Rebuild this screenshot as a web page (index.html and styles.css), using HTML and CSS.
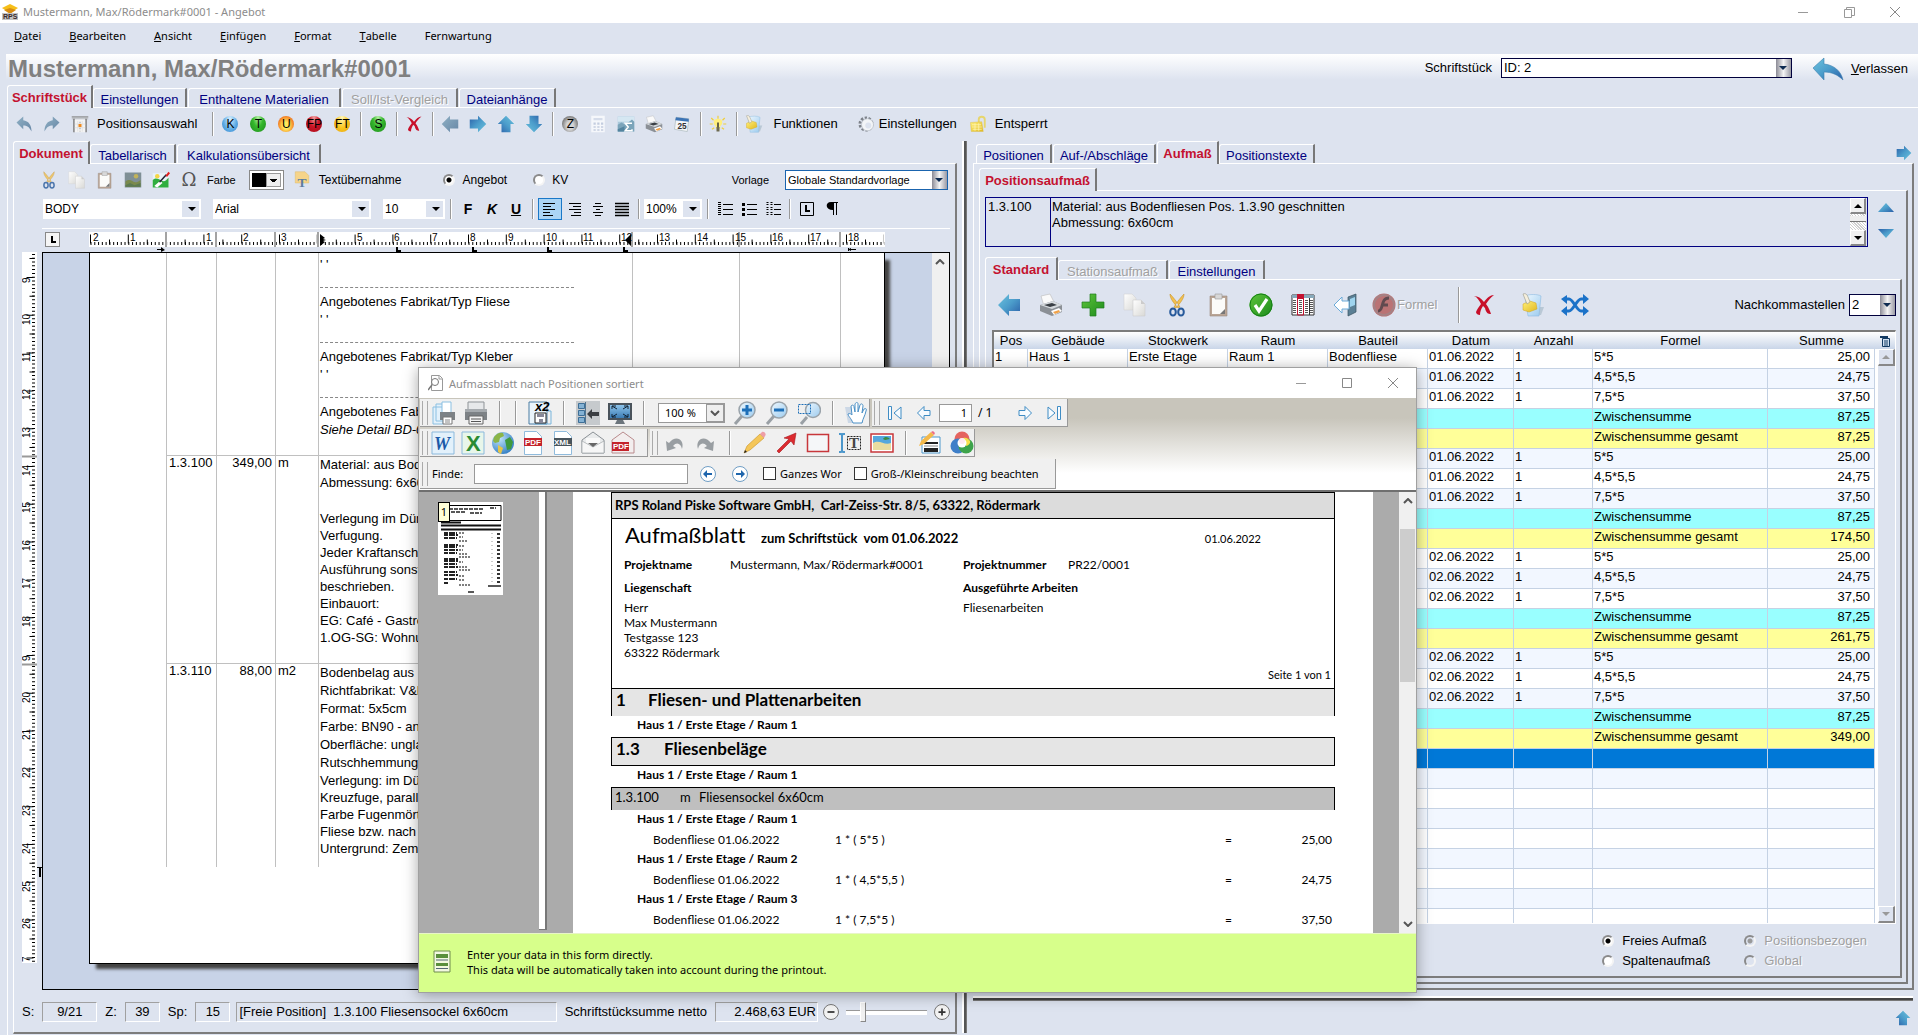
FILE: index.html
```html
<!DOCTYPE html>
<html lang="de">
<head>
<meta charset="utf-8">
<title>Mustermann, Max/Rödermark#0001 - Angebot</title>
<link rel="stylesheet" href="styles.css">
</head>
<body>
<svg class="defs" aria-hidden="true">
  <defs>
    <linearGradient id="gBlue" x1="0" y1="0" x2="1" y2="1"><stop offset="0" stop-color="#6cc4de"/><stop offset=".5" stop-color="#4c9dcb"/><stop offset="1" stop-color="#2a5fa8"/></linearGradient>
    <linearGradient id="gSlate" x1="0" y1="0" x2="1" y2="1"><stop offset="0" stop-color="#8fb0c4"/><stop offset="1" stop-color="#6787a6"/></linearGradient>
    <linearGradient id="gGreen" x1="0" y1="0" x2="1" y2="1"><stop offset="0" stop-color="#5fc63a"/><stop offset="1" stop-color="#1c8a1c"/></linearGradient>
    <linearGradient id="gPaper" x1="0" y1="0" x2="1" y2="1"><stop offset="0" stop-color="#fff"/><stop offset="1" stop-color="#d9d9d6"/></linearGradient>
    <linearGradient id="gGold" x1="0" y1="0" x2="1" y2="1"><stop offset="0" stop-color="#fff07a"/><stop offset="1" stop-color="#e0b820"/></linearGradient>
    <linearGradient id="gGlass" x1="0" y1="0" x2="1" y2="1"><stop offset="0" stop-color="#eef8ff"/><stop offset="1" stop-color="#9ccbee"/></linearGradient>
    <linearGradient id="gSky" x1="0" y1="0" x2="0" y2="1"><stop offset="0" stop-color="#8cc3ea"/><stop offset="1" stop-color="#3c7cb4"/></linearGradient>
    <radialGradient id="gGlobe" cx=".35" cy=".3" r=".8"><stop offset="0" stop-color="#bfe3fa"/><stop offset="1" stop-color="#2b78c0"/></radialGradient>
  </defs>
  <symbol id="undo" viewBox="0 0 24 24"><path d="M2 10 11 2v5c7 1 11 6 11 15-3-6-6-8-11-8v5z"/></symbol>
  <symbol id="redo" viewBox="0 0 24 24"><path d="M22 10 13 2v5C6 8 2 13 2 22c3-6 6-8 11-8v5z"/></symbol>
  <symbol id="arrow" viewBox="0 0 24 24"><path d="M1 12 12 1v5h11v12H12v5z"/></symbol>
  <symbol id="leave" viewBox="0 0 32 24"><path d="M1 11 12 1v6c10 1 17 7 19 16-5-5-11-8-19-8v8z" fill="url(#gBlue)" stroke="#3c7fae" stroke-width=".6"/></symbol>
  <symbol id="cross" viewBox="0 0 24 24"><path d="M2 3c4 0 7 2 10 6 3-4 6-7 10-7-4 3-6 6-8 9 3 4 4 7 5 10-3 0-5-1-6-6-1-1-1-1-2-2-2 3-3 6-3 9-2 0-4-1-4-3 1-3 3-5 5-8C7 7 5 4 2 3z" fill="#c8102a"/></symbol>
  <symbol id="window" viewBox="0 0 24 24"><path d="M1 2h22v4H1z" fill="#c4c7cc"/><path d="M1 2h22v1H1z" fill="#777"/><path d="M4 5v18M20 5v18" stroke="#777" stroke-width="2"/><path d="M5 6h14v17H5z" fill="#f4f4f4"/><path d="M9 8v14M15 8v14M5 12h14M5 17h14" stroke="#ddd"/><path d="M12 9v13" stroke="#bbb" stroke-width="2" stroke-dasharray="2 2"/><path d="M10 12h4v4h-4z" fill="#f08a1c"/></symbol>
  <symbol id="calc" viewBox="0 0 24 24"><path d="M3 1h18v22H3z" fill="#f5f7fb"/><path d="M6 4h12v3H6z" fill="#d5dcea"/><path d="M6 10h3v3H6zm5 0h3v3h-3zm5 0h3v3h-3zM6 15h3v2H6zm5 0h3v2h-3zm5 0h3v2h-3zM6 19h3v2H6zm5 0h3v2h-3zm5 0h3v2h-3z" fill="#c3cde0"/></symbol>
  <symbol id="chart" viewBox="0 0 24 24"><path d="M1 2h22v20H1z" fill="#a9c7da"/><path d="M1 2h22v7H1z" fill="#d5e7f2"/><path d="M1 13l5-3 5 3 9-7 3 3v13H1z" fill="#7ba4ba"/><path d="M1 19l9-4v7H1z" fill="#53849f"/><path d="M19 12v-1h-8l4 5-4 5h9v-2" fill="none" stroke="#fff" stroke-width="2"/></symbol>
  <symbol id="printer" viewBox="0 0 24 24"><path d="M2 3 11 1l4 8-10 4z" fill="#fafafa" stroke="#bbb" stroke-width=".6"/><path d="M1 12 14 8l9 4v7l-10 4L1 18z" fill="#8b9096"/><path d="M1 12 14 8l9 4-10 4z" fill="#d6dade"/><path d="M5 12l8-2 5 2-7 2z" fill="#3a3f45"/><path d="M12 18l8-3 3 3-8 4z" fill="#fff"/><path d="M14 19l6-2 1 2-5 2z" fill="#f0a24a"/></symbol>
  <symbol id="bulb" viewBox="0 0 24 24"><path d="M12 1v4M3 4l3 3M21 4l-3 3M1 12h4M19 12h4M4 19l3-2M20 19l-3-2" stroke="#f0cf3c" stroke-width="1.6"/><path d="M12 5c7 0 7 7 3 10v3H9v-3C5 12 5 5 12 5z" fill="#ffef7c"/><path d="M10 16h4v6h-4z" fill="#6d6a50"/><path d="M12 10v6" stroke="#333" stroke-width="2"/></symbol>
  <symbol id="bin" viewBox="0 0 24 24"><path d="M17 14h6l-3 8h-4z" fill="#a9bccb" opacity=".7"/><path d="M4 3c4-2 13-2 16 0l-2 20H7z" fill="url(#gGlass)" stroke="#8dbbe0" stroke-width=".6"/><path d="M2 11l7-3 6 2 1 6-8 3-6-2z" fill="url(#gGold)" stroke="#d3a51d" stroke-width=".5"/><path d="M2 1c2-1 4 0 5 3l2 5-3 2z" fill="#f6efdc" stroke="#998" stroke-width=".6"/></symbol>
  <symbol id="gear" viewBox="0 0 24 24"><circle cx="12" cy="12" r="8" fill="none" stroke="#7d828a" stroke-width="4" stroke-dasharray="3 2"/><circle cx="14" cy="13" r="8" fill="#f3f5f8" stroke="#bcc2ca"/><circle cx="15" cy="14" r="4" fill="#dde3ef"/></symbol>
  <symbol id="lock" viewBox="0 0 24 24"><path d="M13 11V6c0-5 8-5 8 0v11" fill="none" stroke="#e7d66d" stroke-width="2.5"/><path d="M2 10l15-1 2 13H3z" fill="url(#gGold)" stroke="#d8bd4a" stroke-width=".6"/><path d="M4 13h12M4 16h13M5 19h12M8 11v10M13 11v10" stroke="#fff7b8"/></symbol>
  <symbol id="scissors" viewBox="0 0 24 24"><path d="M5 1c0 5 4 9 8 14l2-1C12 9 8 4 5 1zM19 1c0 5-4 9-8 14l-2-1c3-5 7-10 10-13z" fill="#f2c14e" stroke="#c8922c" stroke-width=".6"/><ellipse cx="8" cy="19" rx="2.8" ry="3.6" fill="none" stroke="#275a9b" stroke-width="2"/><ellipse cx="16" cy="19" rx="2.8" ry="3.6" fill="none" stroke="#275a9b" stroke-width="2"/></symbol>
  <symbol id="copy" viewBox="0 0 24 24"><path d="M1 1h8l4 4v12H1z" fill="url(#gPaper)" stroke="#d4d4d4" stroke-width=".6"/><path d="M10 7h8l4 4v12H10z" fill="url(#gPaper)" stroke="#ccc" stroke-width=".6"/><path d="M18 7v4h4" fill="#ccc"/></symbol>
  <symbol id="paste" viewBox="0 0 24 24"><path d="M3 3h17v20H3z" fill="#b9a596" stroke="#9c8a7d" stroke-width=".6"/><path d="M5 5h13v16H5z" fill="#fbfbf9"/><path d="M8 1h7v5H8z" fill="#d8d8d8" stroke="#999" stroke-width=".6"/><path d="M13 21l5-5v5z" fill="#777"/></symbol>
  <symbol id="image" viewBox="0 0 24 24"><path d="M1 2h22v20H1z" fill="#7f8f95"/><path d="M2 14c4-3 7-2 10 0s6 1 10-2v9H2z" fill="#7a8a4c"/><circle cx="16" cy="7" r="3" fill="#c2b35a"/><path d="M2 19l6-3 6 3 8-3v5H2z" fill="#5c7a52"/></symbol>
  <symbol id="imageedit" viewBox="0 0 24 24"><path d="M1 3h21v19H1z" fill="#e9f3f8"/><path d="M1 12c5-4 8-1 12 1s6-1 9-4v13H1z" fill="#2fae3f"/><path d="M3 20l8-7 3 3-7 6z" fill="#fff"/><circle cx="7" cy="7" r="3" fill="#f6d548"/><path d="M10 15 19 5" stroke="#223" stroke-width="2"/><path d="M18 6l4-5 2 2-4 5z" fill="#e02020"/></symbol>
  <symbol id="plus" viewBox="0 0 24 24"><path d="M9 1h6v8h8v6h-8v8H9v-8H1V9h8z" fill="url(#gGreen)" stroke="#1f7d1f" stroke-width=".7"/></symbol>
  <symbol id="check" viewBox="0 0 24 24"><circle cx="12" cy="12" r="11.5" fill="url(#gGreen)"/><circle cx="12" cy="12" r="11" fill="none" stroke="#158015"/><path d="M6 12l4 6 8-12" fill="none" stroke="#fff" stroke-width="3.2"/></symbol>
  <symbol id="grid" viewBox="0 0 24 24"><path d="M1 2h22v20H1z" fill="#fff" stroke="#333"/><path d="M1 2h5v3H1zM13 2h10v3H13z" fill="#8ab"/><path d="M3.500 7v14M9.500 7v14M15.500 7v14M20.500 7v14" stroke="#555" stroke-width="3" stroke-dasharray="1 1"/><path d="M6 1h7v5H6z" fill="#c41230"/><path d="M6.500 3h6v19h-6z" fill="none" stroke="#c41230"/><path d="M18.500 5v17" stroke="#333"/></symbol>
  <symbol id="device" viewBox="0 0 24 24"><path d="M15 4l8-3v18l-8 4z" fill="#5b8095" stroke="#37505f" stroke-width=".7"/><path d="M17 6l5-2v8l-5 2z" fill="#9ed4ee"/><path d="M1 12l8-8v4h7v8H9v4z" fill="#fff" stroke="#6aaad8"/></symbol>
  <symbol id="flash" viewBox="0 0 24 24"><circle cx="12" cy="12" r="11.500" fill="#b5605f"/><circle cx="12" cy="12" r="10" fill="none" stroke="#9c7172" stroke-width="2"/><path d="M17 5c-5 0-6 4-7 8s-2 5-4 5M10 12h6" fill="none" stroke="#4b3034" stroke-width="3"/></symbol>
  <symbol id="shuffle" viewBox="0 0 28 24"><path d="M3 6h5c4 0 8 12 12 12h4M3 18h5c4 0 8-12 12-12h4" fill="none" stroke="#1b72c8" stroke-width="3"/><path d="M22 1l6 5-6 5zM22 13l6 5-6 5zM6 2 0 6l6 5zM6 13l-6 5 6 5z" fill="#1b72c8"/></symbol>
  <symbol id="tri" viewBox="0 0 16 9"><path d="M0 9 8 0l8 9z" fill="url(#gBlue)"/></symbol>
  <symbol id="chev" viewBox="0 0 10 6"><path d="M1 5l4-4 4 4" fill="none" stroke="currentColor" stroke-width="2"/></symbol>
  <symbol id="min" viewBox="0 0 12 12"><path d="M1 6.500h10" stroke="#999"/></symbol>
  <symbol id="max" viewBox="0 0 12 12"><path d="M1.500 1.500h9v9h-9z" fill="none" stroke="#888"/></symbol>
  <symbol id="restore" viewBox="0 0 12 12"><path d="M1.500 3.500h7v8h-7zM3.500 3V1.500h8v8H9" fill="none" stroke="#999"/></symbol>
  <symbol id="close" viewBox="0 0 12 12"><path d="M1 1l10 10M11 1 1 11" stroke="#888"/></symbol>
  <symbol id="left" viewBox="0 0 16 16"><path d="M1 2.500h12M1 5.500h8M1 8.500h12M1 11.500h7M1 14.500h10" stroke="#000"/></symbol>
  <symbol id="right" viewBox="0 0 16 16"><path d="M3 2.500h12M7 5.500h8M3 8.500h12M8 11.500h7M5 14.500h10" stroke="#000"/></symbol>
  <symbol id="center" viewBox="0 0 16 16"><path d="M5 2.500h6M3 5.500h10M6 8.500h4M3 11.500h10M5 14.500h6" stroke="#000"/></symbol>
  <symbol id="justify" viewBox="0 0 16 16"><path d="M1 2.500h14M1 5.500h14M1 8.500h14M1 11.500h14M1 14.500h14" stroke="#000" stroke-width="1.400"/></symbol>
  <symbol id="numlist" viewBox="0 0 16 16"><path d="M6 3.500h10M6 8.500h10M6 13.500h10" stroke="#000"/><path d="M2.500 1v14" stroke="#000" stroke-width="3" stroke-dasharray="1 1"/></symbol>
  <symbol id="bullist" viewBox="0 0 16 16"><path d="M6 3.500h10M6 8.500h10M6 13.500h10" stroke="#000"/><path d="M1 2h3v3H1zm0 5h3v3H1zm0 5h3v3H1z"/></symbol>
  <symbol id="multilist" viewBox="0 0 16 16"><path d="M9 3.500h7M9 8.500h7M9 13.500h7" stroke="#000"/><path d="M2.500 1v4M6.500 1v4M2.500 6v4M6.500 6v4M2.500 11v4M6.500 11v4" stroke="#000" stroke-width="2" stroke-dasharray="1 1"/></symbol>
  <symbol id="tabframe" viewBox="0 0 16 16"><path d="M1.500 1.500h13v13h-13z" fill="none" stroke="#000"/><path d="M6 4h2v5h3v2H6z"/></symbol>
  <symbol id="para" viewBox="0 0 16 16"><path d="M8 1h7v1h-1v12h-1V2h-2v12h-1V9C2 9 2 1 8 1z"/></symbol>
  <symbol id="form" viewBox="0 0 24 24"><path d="M4 1h16v21H4z" fill="#f2f8e0" stroke="#6f8c4c"/><path d="M6 4h12v4H6zM6 13h12v3H6z" fill="#5a8f3c"/><path d="M6 10h12M6 18.500h12" stroke="#567"/></symbol>

  <symbol id="preview" viewBox="0 0 16 16"><path d="M3.500.500h8l3 3v12h-11z" fill="#fff" stroke="#999"/><path d="M11 1v3h3" fill="none" stroke="#999"/><circle cx="7" cy="7" r="3.500" fill="#fff" stroke="#777"/><path d="M4 10l-4 5" stroke="#777" stroke-width="1.500"/></symbol>
  <symbol id="prints" viewBox="0 0 24 24"><path d="M1 6h10v17H1zM4 3h10v17H4z" fill="#e3f1fb" stroke="#8bc0e2"/><path d="M10 1h9v12h-9z" fill="#fff" stroke="#8bc0e2"/><path d="M8 11h15v8H8z" fill="#7d8286"/><path d="M11 16h9v7h-9z" fill="#fff" stroke="#777"/><path d="M13 19h5M13 21h5" stroke="#888"/></symbol>
  <symbol id="print" viewBox="0 0 24 24"><path d="M4 1h16v9H4z" fill="#e6e8ea" stroke="#8e9397"/><path d="M1 8h22v11H1z" fill="#7d8286"/><path d="M1 8h22v3H1z" fill="#a5aaae"/><path d="M5 15h14v8H5z" fill="#f4f4f4" stroke="#666"/><path d="M7 18h10M7 20.500h10" stroke="#555"/></symbol>
  <symbol id="thumbs" viewBox="0 0 24 24"><path d="M0 0h24v24H0z" fill="#c6cacd"/><path d="M2.500 2.500h6v5h-6zM2.500 9.500h6v5h-6zM2.500 16.500h6v5h-6z" fill="#84b2d4" stroke="#3e6f97"/><path d="M9.500 1v22" stroke="#51748f"/><path d="M11 13l5-5v3h7v4h-7v3z" fill="#3b3f43"/></symbol>
  <symbol id="screen" viewBox="0 0 24 24"><path d="M0 2h24v17H0z" fill="#4a535b"/><path d="M2 4h20v13H2z" fill="url(#gSky)"/><path d="M4 8V5h4M16 5h4v3M20 13v3h-4M8 16H4v-3M4 5l5 3M20 5l-5 3M4 16l5-3M20 16l-5-3" fill="none" stroke="#123"/><path d="M9 19h6l2 4H7z" fill="#6c757c"/></symbol>
  <symbol id="zoomin" viewBox="0 0 24 24"><path d="M2 23l7-8" stroke="#9aa0a5" stroke-width="3"/><circle cx="14" cy="9" r="8" fill="url(#gGlass)" stroke="#9aa3aa" stroke-width="1.500"/><path d="M14 4v10M9 9h10" stroke="#1d6fb8" stroke-width="3"/></symbol>
  <symbol id="zoomout" viewBox="0 0 24 24"><path d="M2 23l7-8" stroke="#9aa0a5" stroke-width="3"/><circle cx="14" cy="9" r="8" fill="url(#gGlass)" stroke="#9aa3aa" stroke-width="1.500"/><path d="M9 9h10" stroke="#1d6fb8" stroke-width="3"/></symbol>
  <symbol id="zoomsel" viewBox="0 0 24 24"><path d="M4 23l6-7" stroke="#9aa0a5" stroke-width="3"/><circle cx="16" cy="9" r="7.500" fill="url(#gGlass)" stroke="#9aa3aa" stroke-width="1.500"/><path d="M1.500 3.500h12v9h-12z" fill="none" stroke="#1d6fb8" stroke-dasharray="2 1"/></symbol>
  <symbol id="hand" viewBox="0 0 24 24"><path d="M0 6h18v16H3z" fill="#ccd8e6"/><path d="M8 22c-2-5-5-7-5-9 2-1 3 0 4 1L6 5c2-2 3 0 3 1l1 5V3c1-2 3-2 3 0v8l2-7c1-2 3-1 3 1l-1 7 2-4c2-1 3 0 2 2-1 5-3 7-4 12z" fill="#fff" stroke="#4b90c6"/></symbol>
  <symbol id="first" viewBox="0 0 16 16"><path d="M1.500 1.500h3v13h-3zM14 2v12L7 8z" fill="#f6fbff" stroke="#3f8cc4"/></symbol>
  <symbol id="last" viewBox="0 0 16 16"><path d="M11.500 1.500h3v13h-3zM2 2v12l7-6z" fill="#f6fbff" stroke="#3f8cc4"/></symbol>
  <symbol id="prev" viewBox="0 0 16 16"><path d="M1.500 8 8 1.500v4h6v5H8v4z" fill="#f6fbff" stroke="#3f8cc4"/></symbol>
  <symbol id="next" viewBox="0 0 16 16"><path d="M14.500 8 8 1.500v4H2v5h6v4z" fill="#f6fbff" stroke="#3f8cc4"/></symbol>
  <symbol id="globe" viewBox="0 0 24 24"><circle cx="12" cy="12" r="11" fill="url(#gGlobe)"/><path d="M3 6c3-4 6-5 9-4l1 3-4 2-1 4-4 1-2-2z" fill="#8bb548"/><path d="M14 9l5-3 3 5-2 7-4 1-1-5z" fill="#3f9a3e"/><path d="M7 14l5 3-2 6-3-2z" fill="#e4c54a"/></symbol>
  <symbol id="mail" viewBox="0 0 24 24"><path d="M1 9 12 1l11 8v13H1z" fill="#e9ebec" stroke="#8b9196"/><path d="M5 7h14v8H5z" fill="#fff" opacity=".7"/><path d="M1 10l11 6 11-6v12H1z" fill="#f6f6f6" stroke="#a2a7ab" stroke-width=".7"/><path d="M7 12l5 4 5-4z" fill="#666"/></symbol>
  <symbol id="gundo" viewBox="0 0 24 24"><path d="M4 10l1 10 9-3-3-2c4-5 8-2 9 3 3-9-6-15-13-6z" fill="#999ea2"/></symbol>
  <symbol id="gredo" viewBox="0 0 24 24"><path d="M20 10l-1 10-9-3 3-2c-4-5-8-2-9 3C1 9 10 3 17 12z" fill="#999ea2"/></symbol>
  <symbol id="pencil" viewBox="0 0 24 24"><path d="M2 22l3-7L18 3l4 4L8 19z" fill="#f4c659" stroke="#c99222" stroke-width=".6"/><path d="M18 3l2-2c2-1 5 2 3 4l-1 2z" fill="#ee9ea6"/><path d="M2 22l1-3 2 2z" fill="#222"/></symbol>
  <symbol id="redarrow" viewBox="0 0 24 24"><path d="M3 20 15 8l-5-1L22 2l-2 12-3-4L5 22z" fill="#dc2a2f" stroke="#a4161b" stroke-width=".6"/></symbol>
  <symbol id="rect" viewBox="0 0 24 24"><path d="M1.500 3.500h21v17h-21z" fill="#f5f7f9" stroke="#c8373b" stroke-width="1.500"/></symbol>
  <symbol id="photo" viewBox="0 0 24 24"><path d="M1 3h22v18H1z" fill="#fff" stroke="#c8373b" stroke-width="1.500"/><path d="M3 5h18v8H3z" fill="#56a7dd"/><path d="M3 12c7-4 11 3 18 0v7H3z" fill="#e9dca0"/><path d="M13 8c2-3 5-2 7 0-3 0-4 2-7 0z" fill="#3b8b45"/></symbol>
  <symbol id="note" viewBox="0 0 24 24"><path d="M4 6h18v16H4z" fill="#fff" stroke="#4d97cb"/><path d="M6 12h14M6 18h14M6 20h14" stroke="#222" stroke-width="2"/><path d="M6 15h14" stroke="#888"/><path d="M1 15l2-5L13 1l3 3L6 13z" fill="#f4b94a"/><path d="M13 1l3 3 1-2-2-2z" fill="#ee6e86"/></symbol>
  <symbol id="colors" viewBox="0 0 24 24"><circle cx="12" cy="8" r="7.500" fill="#e5645f"/><circle cx="8" cy="15" r="7.500" fill="#3f7fc8"/><circle cx="16" cy="15" r="7.500" fill="#3da34a"/><path d="M16 15c0-5-2-7-4-7 3-3 7 0 8 2s-2 5-4 5z" fill="#f6e04a"/><circle cx="12" cy="12" r="4.500" fill="#fff"/><circle cx="12" cy="10" r="3" fill="#ffe9f0"/></symbol>
  <symbol id="goleft" viewBox="0 0 16 16"><circle cx="8" cy="8" r="7.500" fill="#fff" stroke="#6f9dc4"/><path d="M3 8l4-4v3h5v2H7v3z" fill="#1f66ad"/></symbol>
  <symbol id="goright" viewBox="0 0 16 16"><circle cx="8" cy="8" r="7.500" fill="#fff" stroke="#6f9dc4"/><path d="M13 8 9 4v3H4v2h5v3z" fill="#1f66ad"/></symbol>
</svg>

<header class="titlebar">
  <svg class="i16" viewBox="0 0 16 16"><path d="M0 4 8 0l8 4-8 5z" fill="#f6bf1a"/><path d="M2 6l6 4 6-4-6-2z" fill="#d98c12"/><path d="M0 9h16v7H0z" fill="#c3c3c3"/><text x="1" y="15" font-size="7" font-weight="bold" fill="#3a2a2a">RPS</text></svg>
  <span class="grow">Mustermann, Max/Rödermark#0001 - Angebot</span>
  <span class="winctl">
    <button aria-label="Minimieren"><svg class="i12"><use href="#min"/></svg></button>
    <button aria-label="Wiederherstellen"><svg class="i12"><use href="#restore"/></svg></button>
    <button aria-label="Schließen"><svg class="i12"><use href="#close"/></svg></button>
  </span>
</header>

<nav class="menubar">
  <button><u>D</u>atei</button><button><u>B</u>earbeiten</button><button><u>A</u>nsicht</button><button><u>E</u>infügen</button><button><u>F</u>ormat</button><button><u>T</u>abelle</button><button>Fernwartung</button>
</nav>

<div class="head">
  <h1>Mustermann, Max/Rödermark#0001</h1>
  <label for="schrift">Schriftstück</label>
  <span class="combo metal navy w-doc"><select id="schrift"><option>ID: 2</option></select></span>
  <button class="leave"><svg><use href="#leave"/></svg><span><u>V</u>erlassen</span></button>
</div>

<div class="tabs main-tabs">
  <button class="tab active">Schriftstück</button><button class="tab">Einstellungen</button><button class="tab">Enthaltene Materialien</button><button class="tab" disabled>Soll/Ist-Vergleich</button><button class="tab">Dateianhänge</button>
</div>

<main class="main-page">
  <div class="toolbar">
    <button aria-label="Rückgängig"><svg class="i20 slate"><use href="#undo"/></svg></button>
    <button aria-label="Wiederholen"><svg class="i20 slate"><use href="#redo"/></svg></button>
    <button class="labelled"><svg class="i20"><use href="#window"/></svg><span>Positionsauswahl</span></button>
    <i class="sep far"></i>
    <button class="ball b-blue">K</button><button class="ball b-green">T</button><button class="ball b-orange">U</button><button class="ball b-red">FP</button><button class="ball b-yellow">FT</button>
    <i class="sep"></i>
    <button class="ball b-green">S</button>
    <i class="sep"></i>
    <button aria-label="Löschen"><svg class="i20"><use href="#cross"/></svg></button>
    <i class="sep"></i>
    <button aria-label="Zurück"><svg class="i20 slate"><use href="#arrow"/></svg></button>
    <button aria-label="Vor"><svg class="i20 blue r180"><use href="#arrow"/></svg></button>
    <button aria-label="Hoch"><svg class="i20 blue r90"><use href="#arrow"/></svg></button>
    <button aria-label="Runter"><svg class="i20 blue r270"><use href="#arrow"/></svg></button>
    <i class="sep"></i>
    <button class="ball b-grey">Z</button>
    <button aria-label="Rechner"><svg class="i20"><use href="#calc"/></svg></button>
    <button aria-label="Summe"><svg class="i20"><use href="#chart"/></svg></button>
    <button aria-label="Drucken"><svg class="i20"><use href="#printer"/></svg></button>
    <button aria-label="Kalender"><svg class="i20" viewBox="0 0 24 24"><path d="M4 3 21 5l-2 17L2 19z" fill="#f4f6f9" stroke="#9aa" stroke-width=".7"/><path d="M4 3 21 5v4L3 7z" fill="#3c74b5"/><text x="6" y="18" font-size="11" font-weight="bold" fill="#333">25</text></svg></button>
    <i class="sep"></i>
    <button aria-label="Tipp"><svg class="i20"><use href="#bulb"/></svg></button>
    <i class="sep"></i>
    <button class="labelled wide"><svg class="i20"><use href="#bin"/></svg><span>Funktionen</span></button>
    <button class="labelled near"><svg class="i20"><use href="#gear"/></svg><span>Einstellungen</span></button>
    <button class="labelled"><svg class="i20"><use href="#lock"/></svg><span>Entsperrt</span></button>
  </div>

  <div class="split">
    <section class="left">
      <div class="tabs doc-tabs">
        <button class="tab active">Dokument</button><button class="tab">Tabellarisch</button><button class="tab">Kalkulationsübersicht</button>
      </div>
      <div class="page editor">
        <div class="row1">
          <button aria-label="Ausschneiden"><svg class="i20 pale"><use href="#scissors"/></svg></button>
          <button aria-label="Kopieren"><svg class="i20"><use href="#copy"/></svg></button>
          <button aria-label="Einfügen"><svg class="i20"><use href="#paste"/></svg></button>
          <button aria-label="Bild"><svg class="i20"><use href="#image"/></svg></button>
          <button aria-label="Bild bearbeiten"><svg class="i20"><use href="#imageedit"/></svg></button>
          <button class="omega">Ω</button>
          <span class="small">Farbe</span>
          <button class="swatch" aria-label="Farbe"><i></i><b></b></button>
          <button class="labelled"><svg class="i20" viewBox="0 0 24 24"><path d="M3 1h13l5 5v10H3z" fill="#f6d489" stroke="#dcb765" stroke-width=".6"/><text class="serif" x="6" y="21" font-size="18" font-weight="bold" fill="#5c7d9e">T</text></svg><span class="t12">Textübernahme</span></button>
          <label class="radio first"><input type="radio" name="art" checked><span>Angebot</span></label>
          <label class="radio"><input type="radio" name="art"><span>KV</span></label>
          <label class="small push" for="vorlage">Vorlage</label>
          <span class="combo metal steel w-tpl"><select id="vorlage"><option>Globale Standardvorlage</option></select></span>
        </div>
        <div class="row2">
          <span class="combo flat w-body"><select aria-label="Formatvorlage"><option>BODY</option></select></span>
          <span class="combo flat w-body"><select aria-label="Schriftart"><option>Arial</option></select></span>
          <span class="combo flat w-size"><select aria-label="Schriftgröße"><option>10</option></select></span>
          <i class="vsep"></i>
          <button class="fmt"><b>F</b></button><button class="fmt"><b><i>K</i></b></button><button class="fmt"><b><u>U</u></b></button>
          <i class="vsep"></i>
          <button class="fmt on" aria-label="Linksbündig"><svg class="i16"><use href="#left"/></svg></button><button class="fmt" aria-label="Rechtsbündig"><svg class="i16"><use href="#right"/></svg></button><button class="fmt" aria-label="Zentriert"><svg class="i16"><use href="#center"/></svg></button><button class="fmt" aria-label="Blocksatz"><svg class="i16"><use href="#justify"/></svg></button>
          <i class="vsep"></i>
          <span class="combo flat w-zoom"><select aria-label="Zoom"><option>100%</option></select></span>
          <i class="vsep"></i>
          <button class="fmt" aria-label="Nummerierung"><svg class="i16"><use href="#numlist"/></svg></button><button class="fmt" aria-label="Aufzählung"><svg class="i16"><use href="#bullist"/></svg></button><button class="fmt" aria-label="Gliederung"><svg class="i16"><use href="#multilist"/></svg></button>
          <i class="vsep"></i>
          <button class="fmt" aria-label="Tabulatoren"><svg class="i16"><use href="#tabframe"/></svg></button><button class="fmt" aria-label="Absatzmarken"><svg class="i16"><use href="#para"/></svg></button>
        </div>
        <div class="work">
          <div class="ruler-top">
            <button class="tabkind" aria-label="Tabulatorart"><svg class="i12" viewBox="0 0 12 12"><path d="M4 2h2v5h3v2H4z"/></svg></button>
            <svg class="hruler" viewBox="0 0 796 20">
              <path d="M0 0h796v15H0z" fill="#fff"/>
              <path d="M1.500 11.500h794" stroke="#000" stroke-width="3" stroke-dasharray="1 2.780"/>
              <path d="M20 10h776" stroke="#000" stroke-width="5" stroke-dasharray="1 36.800"/>
              <path d="M1 7h794" stroke="#000" stroke-width="9" stroke-dasharray="1 36.800"/>
              <path d="M77 0v15M127 0v15M186 0v15M229 0v15M543 0v15M650 0v15M751 0v15" stroke="#a3a3a3" stroke-width="2"/>
              <g class="nums"><text x="4" y="9">2</text><text x="41" y="9">1</text><text x="117" y="9">1</text><text x="154" y="9">2</text><text x="192" y="9">3</text><text x="268" y="9">5</text><text x="305" y="9">6</text><text x="343" y="9">7</text><text x="381" y="9">8</text><text x="419" y="9">9</text><text x="457" y="9">10</text><text x="494" y="9">11</text><text x="532" y="9">12</text><text x="570" y="9">13</text><text x="608" y="9">14</text><text x="646" y="9">15</text><text x="683" y="9">16</text><text x="721" y="9">17</text><text x="759" y="9">18</text></g>
              <path d="M231 2l5 4-2 1 3 1-3 1 2 1-5 4zM542 2v12l-6-6zM68 17h4v-2l4 3-4 2v-2h-4zM760 16v4M759 16h1v1l2-1v1h5v1h-5v1l-2-1v1h-1z"/>
              <path d="M307 15h2v3h3v2h-5zM383 15h2v3h3v2h-5zM458 15h2v3h3v2h-5zM534 15h2v3h3v2h-5z"/>
            </svg>
          </div>
          <svg class="vruler" viewBox="0 0 20 712">
            <path d="M0 0h15v711H0z" fill="#fff"/>
            <path d="M11.500 2v709" stroke="#000" stroke-width="3" stroke-dasharray="1 2.780"/>
            <path d="M10 6v705" stroke="#000" stroke-width="5" stroke-dasharray="1 36.800"/>
            <path d="M8 25v686" stroke="#000" stroke-width="7" stroke-dasharray="1 36.800"/>
            <path d="M0 204.500h15M0 412.500h15" stroke="#999" stroke-width="2"/>
            <g class="nums"><text transform="translate(8 31) rotate(-90)">9</text><text transform="translate(8 73) rotate(-90)">10</text><text transform="translate(8 110) rotate(-90)">11</text><text transform="translate(8 148) rotate(-90)">12</text><text transform="translate(8 186) rotate(-90)">13</text><text transform="translate(8 224) rotate(-90)">14</text><text transform="translate(8 261) rotate(-90)">15</text><text transform="translate(8 299) rotate(-90)">16</text><text transform="translate(8 337) rotate(-90)">17</text><text transform="translate(8 375) rotate(-90)">18</text><text transform="translate(8 409) rotate(-90)">9</text><text transform="translate(8 451) rotate(-90)">20</text><text transform="translate(8 488) rotate(-90)">21</text><text transform="translate(8 526) rotate(-90)">22</text><text transform="translate(8 564) rotate(-90)">23</text><text transform="translate(8 602) rotate(-90)">24</text><text transform="translate(8 640) rotate(-90)">25</text><text transform="translate(8 677) rotate(-90)">26</text><text transform="translate(8 710) rotate(-90)">7</text></g>
            <path d="M15 615h5v1h-1v9h-2v-9h-2z"/>
          </svg>
          <div class="canvas">
            <div class="sheet">
              <table class="doc">
                <colgroup><col class="d1"><col class="d2"><col class="d3"><col class="d4"><col class="d5"><col class="d6"></colgroup>
                <tr class="r1"><td></td><td></td><td></td><td class="txt">
                  <p>' '</p><p class="dash"></p><p>Angebotenes Fabrikat/Typ Fliese</p>
                  <p>' '</p><p class="dash"></p><p>Angebotenes Fabrikat/Typ Kleber</p>
                  <p>' '</p><p class="dash"></p><p>Angebotenes Fab</p>
                  <p><em>Siehe Detail BD-0</em></p>
                </td><td></td><td></td></tr>
                <tr class="r2"><td>1.3.100</td><td class="num">349,00</td><td>m</td><td class="txt">
                  <p>Material: aus Bod</p><p>Abmessung: 6x60</p><p>&nbsp;</p>
                  <div class="tight"><p>Verlegung im Dün</p><p>Verfugung.</p><p>Jeder Kraftanschl</p><p>Ausführung sonst</p><p>beschrieben.</p><p>Einbauort:</p><p>EG: Café - Gastro</p><p>1.OG-SG: Wohnu</p></div>
                </td><td></td><td></td></tr>
                <tr class="r3"><td>1.3.110</td><td class="num">88,00</td><td>m2</td><td class="txt">
                  <p>Bodenbelag aus</p><p>Richtfabrikat: V&amp;B</p><p>Format: 5x5cm</p><p>Farbe: BN90 - ant</p><p>Oberfläche: unglas</p><p>Rutschhemmung</p>
                  <div class="tight"><p>Verlegung: im Dün</p><p>Kreuzfuge, paralle</p><p>Farbe Fugenmört</p><p>Fliese bzw. nach</p><p>Untergrund: Zeme</p></div>
                </td><td></td><td></td></tr>
              </table>
            </div>
            <div class="vscroll"><svg viewBox="0 0 10 6"><use href="#chev"/></svg></div>
          </div>
        </div>
        <footer class="status">
          <span>S:</span><output class="well w1">9/21</output>
          <span>Z:</span><output class="well w2">39</output>
          <span>Sp:</span><output class="well w2">15</output>
          <output class="well fill">[Freie Position]&nbsp; 1.3.100 Fliesensockel 6x60cm</output>
          <span>Schriftstücksumme netto</span><output class="well w3">2.468,63 EUR</output>
          <button class="round" aria-label="Verkleinern"><svg viewBox="0 0 16 16"><path d="M4 8h8" stroke="#333" stroke-width="2"/></svg></button>
          <input class="slider" type="range" min="0" max="100" value="18" aria-label="Zoomstufe">
          <button class="round" aria-label="Vergrößern"><svg viewBox="0 0 16 16"><path d="M4 8h8M8 4v8" stroke="#333" stroke-width="2"/></svg></button>
        </footer>
      </div>
    </section>

    <div class="gutter"></div>

    <section class="right">
      <div class="tabs pos-tabs">
        <button class="tab">Positionen</button><button class="tab">Auf-/Abschläge</button><button class="tab active">Aufmaß</button><button class="tab">Positionstexte</button>
        <button class="corner" aria-label="Weiter"><svg class="i16 blue r180"><use href="#arrow"/></svg></button>
      </div>
      <div class="page p1">
        <div class="tabs one-tab"><button class="tab active">Positionsaufmaß</button></div>
        <div class="page p2">
          <div class="posrow">
            <div class="posbox">
              <span class="posno">1.3.100</span>
              <span class="postext">Material: aus Bodenfliesen Pos. 1.3.90 geschnitten<br>Abmessung: 6x60cm</span>
              <span class="sb"><i class="up"></i><s></s><i class="down"></i></span>
            </div>
            <div class="updown">
              <button aria-label="Vorherige"><svg><use href="#tri"/></svg></button>
              <button aria-label="Nächste"><svg class="r180"><use href="#tri"/></svg></button>
            </div>
          </div>
          <div class="tabs kind-tabs"><button class="tab active">Standard</button><button class="tab" disabled>Stationsaufmaß</button><button class="tab">Einstellungen</button></div>
          <div class="page p3">
            <div class="bigbar">
              <button aria-label="Zurück"><svg class="i24 blue"><use href="#arrow"/></svg></button>
              <button aria-label="Drucken"><svg class="i24"><use href="#printer"/></svg></button>
              <button aria-label="Neu"><svg class="i24"><use href="#plus"/></svg></button>
              <button aria-label="Kopieren"><svg class="i24"><use href="#copy"/></svg></button>
              <button aria-label="Ausschneiden"><svg class="i24"><use href="#scissors"/></svg></button>
              <button aria-label="Einfügen"><svg class="i24"><use href="#paste"/></svg></button>
              <button aria-label="Übernehmen"><svg class="i24"><use href="#check"/></svg></button>
              <button aria-label="Spalten"><svg class="i24"><use href="#grid"/></svg></button>
              <button aria-label="Gerät"><svg class="i24"><use href="#device"/></svg></button>
              <button class="formel" disabled><svg class="i24"><use href="#flash"/></svg><span>Formel</span></button>
              <i class="bigsep"></i>
              <button aria-label="Löschen"><svg class="i24"><use href="#cross"/></svg></button>
              <button class="binbtn" aria-label="Leeren"><svg class="i24"><use href="#bin"/></svg></button>
              <button aria-label="Tauschen"><svg class="i28"><use href="#shuffle"/></svg></button>
              <label class="push" for="nk">Nachkommastellen</label>
              <span class="combo metal navy w-nk"><select id="nk"><option>2</option></select></span>
            </div>
            <div class="gridframe">
              <div class="gridclip">
                <table class="calc">
                  <colgroup><col class="c1"><col class="c2"><col class="c2"><col class="c2"><col class="c2"><col class="c3"><col class="c4"><col><col class="c5"></colgroup>
                  <thead><tr><th>Pos</th><th>Gebäude</th><th>Stockwerk</th><th>Raum</th><th>Bauteil</th><th>Datum</th><th>Anzahl</th><th>Formel</th><th>Summe</th></tr></thead>
                  <tbody>
                    <tr><td>1</td><td>Haus 1</td><td>Erste Etage</td><td>Raum 1</td><td>Bodenfliese</td><td>01.06.2022</td><td>1</td><td>5*5</td><td>25,00</td></tr>
                    <tr><td></td><td></td><td></td><td></td><td></td><td>01.06.2022</td><td>1</td><td>4,5*5,5</td><td>24,75</td></tr>
                    <tr><td></td><td></td><td></td><td></td><td></td><td>01.06.2022</td><td>1</td><td>7,5*5</td><td>37,50</td></tr>
                    <tr class="sub"><td></td><td></td><td></td><td></td><td></td><td></td><td></td><td>Zwischensumme</td><td>87,25</td></tr>
                    <tr class="tot"><td></td><td></td><td></td><td></td><td></td><td></td><td></td><td>Zwischensumme gesamt</td><td>87,25</td></tr>
                    <tr><td></td><td></td><td></td><td></td><td></td><td>01.06.2022</td><td>1</td><td>5*5</td><td>25,00</td></tr>
                    <tr><td></td><td></td><td></td><td></td><td></td><td>01.06.2022</td><td>1</td><td>4,5*5,5</td><td>24,75</td></tr>
                    <tr><td></td><td></td><td></td><td></td><td></td><td>01.06.2022</td><td>1</td><td>7,5*5</td><td>37,50</td></tr>
                    <tr class="sub"><td></td><td></td><td></td><td></td><td></td><td></td><td></td><td>Zwischensumme</td><td>87,25</td></tr>
                    <tr class="tot"><td></td><td></td><td></td><td></td><td></td><td></td><td></td><td>Zwischensumme gesamt</td><td>174,50</td></tr>
                    <tr><td></td><td></td><td></td><td></td><td></td><td>02.06.2022</td><td>1</td><td>5*5</td><td>25,00</td></tr>
                    <tr><td></td><td></td><td></td><td></td><td></td><td>02.06.2022</td><td>1</td><td>4,5*5,5</td><td>24,75</td></tr>
                    <tr><td></td><td></td><td></td><td></td><td></td><td>02.06.2022</td><td>1</td><td>7,5*5</td><td>37,50</td></tr>
                    <tr class="sub"><td></td><td></td><td></td><td></td><td></td><td></td><td></td><td>Zwischensumme</td><td>87,25</td></tr>
                    <tr class="tot"><td></td><td></td><td></td><td></td><td></td><td></td><td></td><td>Zwischensumme gesamt</td><td>261,75</td></tr>
                    <tr><td></td><td></td><td></td><td></td><td></td><td>02.06.2022</td><td>1</td><td>5*5</td><td>25,00</td></tr>
                    <tr><td></td><td></td><td></td><td></td><td></td><td>02.06.2022</td><td>1</td><td>4,5*5,5</td><td>24,75</td></tr>
                    <tr><td></td><td></td><td></td><td></td><td></td><td>02.06.2022</td><td>1</td><td>7,5*5</td><td>37,50</td></tr>
                    <tr class="sub"><td></td><td></td><td></td><td></td><td></td><td></td><td></td><td>Zwischensumme</td><td>87,25</td></tr>
                    <tr class="tot"><td></td><td></td><td></td><td></td><td></td><td></td><td></td><td>Zwischensumme gesamt</td><td>349,00</td></tr>
                    <tr class="sel"><td></td><td></td><td></td><td></td><td></td><td></td><td></td><td></td><td></td></tr>
                    <tr><td></td><td></td><td></td><td></td><td></td><td></td><td></td><td></td><td></td></tr>
                    <tr><td></td><td></td><td></td><td></td><td></td><td></td><td></td><td></td><td></td></tr>
                    <tr><td></td><td></td><td></td><td></td><td></td><td></td><td></td><td></td><td></td></tr>
                    <tr><td></td><td></td><td></td><td></td><td></td><td></td><td></td><td></td><td></td></tr>
                    <tr><td></td><td></td><td></td><td></td><td></td><td></td><td></td><td></td><td></td></tr>
                    <tr><td></td><td></td><td></td><td></td><td></td><td></td><td></td><td></td><td></td></tr>
                    <tr><td></td><td></td><td></td><td></td><td></td><td></td><td></td><td></td><td></td></tr>
                    <tr><td></td><td></td><td></td><td></td><td></td><td></td><td></td><td></td><td></td></tr>
                  </tbody>
                </table>
              </div>
              <div class="gridscroll">
                <button class="colpick" aria-label="Spaltenauswahl"><svg class="i12" viewBox="0 0 12 12"><path d="M1 1h8v2H1z" fill="#123a63"/><path d="M3.500 3.500h7v8h-7z" fill="#cfe0f2" stroke="#123a63"/><path d="M5 6h4M5 8h4M5 10h4" stroke="#123a63"/></svg></button>
                <i class="gs up"></i><i class="gs down"></i>
              </div>
            </div>
            <div class="modes">
              <div>
                <label class="radio"><input type="radio" name="modus" checked><span>Freies Aufmaß</span></label>
                <label class="radio"><input type="radio" name="modus"><span>Spaltenaufmaß</span></label>
              </div>
              <div>
                <label class="radio off"><input type="radio" name="bezug" checked disabled><span>Positionsbezogen</span></label>
                <label class="radio off"><input type="radio" name="bezug" disabled><span>Global</span></label>
              </div>
            </div>
          </div>
        </div>
      </div>
      <div class="hbar"></div>
      <div class="dock"><button aria-label="Einblenden"><svg class="i16 blue r90"><use href="#arrow"/></svg></button></div>
    </section>
  </div>
</main>

<section class="dialog" role="dialog" aria-label="Aufmassblatt nach Positionen sortiert">
  <header class="dtitle">
    <svg class="i16"><use href="#preview"/></svg>
    <span class="grow">Aufmassblatt nach Positionen sortiert</span>
    <span class="winctl">
      <button aria-label="Minimieren"><svg class="i12"><use href="#min"/></svg></button>
      <button aria-label="Maximieren"><svg class="i12"><use href="#max"/></svg></button>
      <button aria-label="Schließen"><svg class="i12"><use href="#close"/></svg></button>
    </span>
  </header>
  <div class="bands">
    <div class="bandrow">
      <div class="band b1">
        <button aria-label="Drucken"><svg class="i24"><use href="#prints"/></svg></button><button aria-label="Schnelldruck"><svg class="i24"><use href="#print"/></svg></button>
        <i class="dsep"></i><i class="dsep"></i>
        <button aria-label="Speichern"><svg class="i24" viewBox="0 0 24 24"><path d="M1 1h18v22H1z" fill="#eaf4fb" stroke="#4a7da3"/><path d="M20 10h3v13H6" fill="none" stroke="#79b5dc"/><path d="M7 12h11v10H7z" fill="#fff" stroke="#222"/><path d="M9 13h7v3H9zM11 18h4v4h-4z" fill="#889"/><text x="7" y="10" font-size="13" font-weight="bold" font-style="italic">x2</text></svg></button>
        <i class="dsep"></i>
        <button aria-label="Miniaturen"><svg class="i24"><use href="#thumbs"/></svg></button><button aria-label="Vollbild"><svg class="i24"><use href="#screen"/></svg></button>
        <i class="dsep"></i>
        <span class="zoombox"><select aria-label="Zoom"><option>100 %</option></select><i><svg viewBox="0 0 10 6" class="r180"><use href="#chev"/></svg></i></span>
        <button aria-label="Größer"><svg class="i24"><use href="#zoomin"/></svg></button><button aria-label="Kleiner"><svg class="i24"><use href="#zoomout"/></svg></button><button aria-label="Bereich"><svg class="i24"><use href="#zoomsel"/></svg></button>
        <i class="dsep"></i>
        <button aria-label="Verschieben"><svg class="i24"><use href="#hand"/></svg></button>
      </div>
      <div class="band b2">
        <button aria-label="Erste"><svg class="i16"><use href="#first"/></svg></button>
        <button aria-label="Vorige"><svg class="i16"><use href="#prev"/></svg></button>
        <input class="pageno" value="1" aria-label="Seite"><span class="t12">/ 1</span>
        <button class="nextbtn" aria-label="Nächste"><svg class="i16"><use href="#next"/></svg></button>
        <button aria-label="Letzte"><svg class="i16"><use href="#last"/></svg></button>
      </div>
    </div>
    <div class="bandrow">
      <div class="band b3">
        <button aria-label="Word"><svg class="i24" viewBox="0 0 24 24"><path d="M1 1h22v22H1z" fill="#e3f1fb" stroke="#8bb9dc"/><text class="serif" x="3" y="19" font-size="18" font-weight="bold" font-style="italic" fill="#1c5aa8">W</text></svg></button><button aria-label="Excel"><svg class="i24" viewBox="0 0 24 24"><path d="M1 1h22v22H1z" fill="#e8f6ea" stroke="#8bb9dc"/><text x="5" y="20" font-size="22" font-weight="bold" fill="#2a8b34">X</text></svg></button><button aria-label="HTML"><svg class="i24"><use href="#globe"/></svg></button><button aria-label="PDF"><svg class="i24" viewBox="0 0 24 24"><path d="M3.500.500h12l5 5v18h-17z" fill="#fff" stroke="#90bbdc"/><path d="M3 7h18v8H3z" fill="#c4232b"/><text x="4" y="14" font-size="8" font-weight="bold" fill="#fff">PDF</text></svg></button><button aria-label="XML"><svg class="i24" viewBox="0 0 24 24"><path d="M3.500.500h12l5 5v18h-17z" fill="#fff" stroke="#90bbdc"/><path d="M3 7h18v8H3z" fill="#48545c"/><text x="3" y="14" font-size="8" font-weight="bold" fill="#fff">XML</text></svg></button><button aria-label="E-Mail"><svg class="i24"><use href="#mail"/></svg></button><button aria-label="PDF per E-Mail"><svg class="i24" viewBox="0 0 24 24"><path d="M1 9 12 1l11 8v13H1z" fill="#f3eeee" stroke="#b98a8c"/><path d="M1 11h17v9H1z" fill="#c4232b"/><text x="2" y="18" font-size="8" font-weight="bold" fill="#fff">PDF</text></svg></button>
      </div>
      <div class="band b4">
        <button aria-label="Rückgängig"><svg class="i24"><use href="#gundo"/></svg></button><button aria-label="Wiederholen"><svg class="i24"><use href="#gredo"/></svg></button>
        <i class="dsep"></i>
        <button aria-label="Stift"><svg class="i24"><use href="#pencil"/></svg></button><button aria-label="Pfeil"><svg class="i24"><use href="#redarrow"/></svg></button><button aria-label="Rechteck"><svg class="i24"><use href="#rect"/></svg></button><button aria-label="Text"><svg class="i24" viewBox="0 0 24 24"><path d="M1 3h2l1 1 1-1h2M1 21h2l1-1 1 1h2M4 4v16" fill="none" stroke="#4d97cb" stroke-width="2"/><path d="M9.500 5.500h13v13h-13z" fill="none" stroke="#222" stroke-dasharray="2 1"/><text class="serif" x="11" y="17" font-size="15" font-weight="bold" fill="#444">T</text></svg></button><button aria-label="Bild"><svg class="i24"><use href="#photo"/></svg></button>
        <i class="dsep"></i>
        <button aria-label="Notiz"><svg class="i24"><use href="#note"/></svg></button><button aria-label="Farben"><svg class="i24"><use href="#colors"/></svg></button>
      </div>
    </div>
    <div class="bandrow">
      <div class="band b5">
        <label for="finde">Finde:</label><input class="find" id="finde">
        <button aria-label="Rückwärts"><svg class="i16"><use href="#goleft"/></svg></button><button aria-label="Vorwärts"><svg class="i16"><use href="#goright"/></svg></button>
        <label class="chk"><input type="checkbox"><span>Ganzes Wor</span></label>
        <label class="chk"><input type="checkbox"><span>Groß-/Kleinschreibung beachten</span></label>
      </div>
    </div>
  </div>
  <div class="view">
    <aside class="thumbpane">
      <svg class="thumb" viewBox="0 0 65 93">
        <path d="M0 0h65v93H0z" fill="#fff"/>
        <path d="M3 3.500h60v15H3z" fill="none" stroke="#000"/>
        <path d="M11 7h35M52 6h6M13 10h14M32 11h12" stroke="#222" stroke-width="1.500" stroke-dasharray="4 1"/>
        <path d="M3 20.500h20M3 23.500h60M3 27.500h60" stroke="#111" stroke-width="2"/>
        <path d="M6 31h13M6 33h14M6 36h13M6 43h14M6 45h13M6 48h14M6 51h13M6 57h14M6 59h14M6 62h13M6 65h14M6 70h13M6 73h14M6 77h13M6 81h4" stroke="#222" stroke-width="2" stroke-dasharray="4 1 6 1"/>
        <path d="M21 31h5M21 35h4M21 39h8M21 44h5M21 48h4M21 52h9M21 55h11M21 60h4M21 65h9M21 68h11M21 74h5M21 78h5M21 83h11" stroke="#555" stroke-width="1.400" stroke-dasharray="2 1"/>
        <path d="M60.500 31v50" stroke="#333" stroke-width="3" stroke-dasharray="2 2"/><path d="M54 31v50" stroke="#999" stroke-width="1" stroke-dasharray="1 3"/>
        <path d="M50 84h13M30 90h6" stroke="#222" stroke-width="1.500"/>
      </svg>
      <span class="badge">1</span>
    </aside>
    <div class="vsplit"></div>
    <div class="pagearea">
      <article class="report">
        <div class="rbar">RPS Roland Piske Software GmbH,&nbsp; Carl-Zeiss-Str. 8/5, 63322, Rödermark</div>
        <div class="rhead">
          <div class="rline"><h2>Aufmaßblatt</h2><b>zum Schriftstück&nbsp; vom 01.06.2022</b><span>01.06.2022</span></div>
          <div class="rgrid">
            <b>Projektname</b><span>Mustermann, Max/Rödermark#0001</span><b>Projektnummer</b><span>PR22/0001</span>
            <b class="two">Liegenschaft</b><b class="two">Ausgeführte Arbeiten</b>
            <address class="two">Herr<br>Max Mustermann<br>Testgasse 123<br>63322 Rödermark</address><span class="two lh">Fliesenarbeiten</span>
          </div>
          <p class="seite">Seite 1 von 1</p>
        </div>
        <h3 class="s1"><span>1</span>Fliesen- und Plattenarbeiten</h3>
        <p class="loc big">Haus 1 / Erste Etage / Raum 1</p>
        <h3 class="s2"><span>1.3</span>Fliesenbeläge</h3>
        <p class="loc big">Haus 1 / Erste Etage / Raum 1</p>
        <h4><span>1.3.100</span><span>m</span>Fliesensockel 6x60cm</h4>
        <p class="loc">Haus 1 / Erste Etage / Raum 1</p>
        <p class="item"><span>Bodenfliese 01.06.2022</span><span>1 * ( 5*5 )</span><span>=</span><span>25,00</span></p>
        <p class="loc">Haus 1 / Erste Etage / Raum 2</p>
        <p class="item"><span>Bodenfliese 01.06.2022</span><span>1 * ( 4,5*5,5 )</span><span>=</span><span>24,75</span></p>
        <p class="loc">Haus 1 / Erste Etage / Raum 3</p>
        <p class="item"><span>Bodenfliese 01.06.2022</span><span>1 * ( 7,5*5 )</span><span>=</span><span>37,50</span></p>
      </article>
    </div>
    <div class="dscroll"><svg viewBox="0 0 10 6"><use href="#chev"/></svg><i></i><svg class="r180" viewBox="0 0 10 6"><use href="#chev"/></svg></div>
  </div>
  <footer class="hint"><svg class="i24"><use href="#form"/></svg><p>Enter your data in this form directly.<br>This data will be automatically taken into account during the printout.</p></footer>
</section>
</body>
</html>
```
FILE: styles.css
```css
:root {
  --face: #dde3ef;
  --crimson: #c4122f;
  --navy: #000080;
  --ui: "Liberation Sans", Arial, sans-serif;
  --seg: "Noto Sans", "Open Sans", sans-serif;
  --rep: Lato, "Open Sans", sans-serif;
}
* { box-sizing: border-box; }
html, body { height: 100%; }
body { margin: 0; background: var(--face); font: 13px/16px var(--ui); color: #000; display: flex; flex-direction: column; overflow: hidden; }
button, input, select, output { font: inherit; color: inherit; }
button { border: 0; padding: 0; background: none; display: flex; align-items: center; justify-content: center; white-space: nowrap; flex: none; }
svg { display: block; flex: none; }
svg text { font-family: var(--ui); }
svg .serif { font-family: "Liberation Serif", serif; }
p, h1, h2, h3, h4 { margin: 0; }
.defs { position: absolute; width: 0; height: 0; }
.grow { flex: 1; }
.push { margin-left: auto; }
.small { font-size: 11px; }
.t12 { font-size: 12px; }
.i12 { width: 12px; height: 12px; }
.i16 { width: 16px; height: 16px; }
.i20 { width: 20px; height: 20px; }
.i24 { width: 24px; height: 24px; }
.i28 { width: 28px; height: 24px; }
.toolbar .i20, .row1 .i20 { padding: 1px; }
.slate { fill: url(#gSlate); }
.blue { fill: url(#gBlue); }
.pale { opacity: .8; }
.r90 { transform: rotate(90deg); }
.r180 { transform: rotate(180deg); }
.r270 { transform: rotate(270deg); }

/* title bar, menu, heading */
.titlebar { height: 23px; background: #fff; display: flex; align-items: center; gap: 5px; padding-left: 2px; font: 11px/16px var(--seg); color: #8c8c8c; flex: none; }
.winctl { display: flex; align-self: stretch; }
.winctl button { width: 46px; }
.menubar { height: 31px; display: flex; align-items: center; padding-bottom: 6px; font: 11px/16px var(--seg); flex: none; }
.menubar button { padding: 0 14px; }
.head { height: 31px; margin-left: 6px; padding-right: 10px; background: linear-gradient(#fff, var(--face) 26px); display: flex; align-items: flex-start; flex: none; }
.head h1 { flex: 1; margin: 1px 0 0 2px; font: bold 24px/28px var(--ui); color: #808080; }
.head label { margin: 6px 9px 0 0; }
.head .combo { margin-top: 4px; }
.leave { margin: 3px 0 0 20px; gap: 7px; }
.leave svg { width: 32px; height: 24px; }

/* combo boxes */
.combo { position: relative; display: flex; flex: none; background: #fff; height: 20px; }
.combo select { appearance: none; border: 0; background: none; width: 100%; padding: 0 2px; outline: 0; }
.combo::after { content: ""; position: absolute; top: 0; right: 0; bottom: 0; width: 15px; pointer-events: none; background: linear-gradient(90deg, #8b8b96, #f4f4f4 50%, #9a9aa5); }
.combo::before { content: ""; position: absolute; z-index: 1; right: 4px; top: 50%; margin-top: -2px; border: 4px solid transparent; border-top-color: #0f2c52; border-bottom: 0; pointer-events: none; }
.combo.flat::after { background: var(--face); border: solid #fff; border-width: 2px 2px 2px 0; width: 17px; }
.combo.flat::before { right: 5px; border-top-color: #000; }
.combo.navy { border: 1px solid #00003c; }
.combo.steel { border: 1px solid #1a64ae; font-size: 11px; }
.w-doc { width: 291px; }
.w-tpl { width: 163px; }
.w-body { width: 158px; }
.w-size { width: 62px; }
.w-zoom { width: 58px; }
.w-nk { width: 47px; }
.combo.w-nk { height: 22px; }

/* tabs and tab pages */
.tabs { display: grid; align-items: end; height: 23px; margin-bottom: -1px; position: relative; z-index: 1; flex: none; }
.main-tabs { padding-left: 7px; grid-template-columns: 86px 95px 154px 117px 98px; }
.doc-tabs { grid-template-columns: 77px 87px 145px; }
.pos-tabs { padding-left: 3px; grid-template-columns: 77px 104px 62px 97px 1fr; }
.one-tab { grid-template-columns: 118px; }
.kind-tabs { grid-template-columns: 73px 111px 97px; }
.tab { height: 19px; margin: 0 1px 1px 0; padding: 3px 0 0; border: solid; border-width: 1px 2px 0 1px; border-color: #fff #777 transparent #fff; color: var(--navy); border-top-left-radius: 3px; }
.tab:disabled { color: #a0a0a0; text-shadow: 1px 1px #fff; }
.tab.active { height: 23px; margin: 0; padding: 2px 0 0; background: var(--face); color: var(--crimson); font-weight: bold; }
.main-page { flex: 1; min-height: 0; margin-left: 7px; border: solid #fff; border-width: 1px 0 0 1px; display: flex; flex-direction: column; }
.page { flex: 1; min-height: 0; border: solid; border-width: 1px 2px 2px 1px; border-color: #fff #7c7c7c #7c7c7c #fff; display: flex; flex-direction: column; }

/* main toolbar */
.toolbar { height: 33px; display: flex; align-items: center; gap: 8px; padding: 0 0 2px 6px; flex: none; }
.labelled { gap: 7px; }
.labelled.wide { gap: 9px; margin-right: 10px; }
.labelled.near { gap: 3px; margin-right: 3px; }
.sep { width: 2px; height: 24px; margin-right: -2px; border-left: 1px solid #999; border-right: 1px solid #fff; flex: none; }
.sep.far { margin-left: 7px; }
.ball { width: 16px; height: 16px; margin: 0 2px; border-radius: 50%; font-size: 12px; }
.b-blue { background: radial-gradient(at 50% 20%, #d8f0ff, #5aa9e4 60%, #3a83c8); }
.b-green { background: radial-gradient(at 50% 10%, #b4efa4, #35b82c 45%, #1e8a1e); }
.b-orange { background: radial-gradient(at 50% 60%, #ffe95a 25%, #f58a2a 65%, #d94a2a); }
.b-red { background: radial-gradient(at 50% 10%, #f0a0a0, #cc1526 45%, #a00c1a); }
.b-yellow { background: radial-gradient(at 50% 10%, #fff8c0, #fbc91e 50%, #e09a10); }
.b-grey { background: radial-gradient(at 50% 60%, #d4d4d4 30%, #8a8a8a 65%, #4a4a4a); }

/* splitter layout */
.split { flex: 1; min-height: 0; display: grid; grid-template-columns: minmax(0, 954fr) 6px minmax(0, 950fr); }
.gutter { border: solid; border-width: 0 1px 0 2px; border-color: #fff #777 #fff #fff; background: #555; margin: 0 1px 2px 0; }
.left { display: flex; flex-direction: column; min-height: 0; padding: 0 5px 1px; }
.right { display: flex; flex-direction: column; min-height: 0; padding: 0 4px 0 5px; }

/* editor bars */
.row1 { height: 32px; display: flex; align-items: center; gap: 8px; padding: 0 7px 0 25px; flex: none; }
.omega { width: 20px; font: 18px/20px "DejaVu Serif", serif; color: #555; }
.swatch { width: 35px; height: 20px; border: 1px solid #888; background: #fff; padding: 2px; margin: 0 0 0 5px; justify-content: space-between; }
.swatch i { width: 14px; height: 14px; background: #000; }
.swatch b { width: 15px; height: 14px; border: 1px solid #999; background: linear-gradient(#000, #000) 3px 5px / 7px 1px no-repeat, linear-gradient(#000, #000) 4px 6px / 5px 1px no-repeat, linear-gradient(#000, #000) 5px 7px / 3px 1px no-repeat, #eee; }
.radio { display: flex; align-items: center; gap: 7px; }
.radio.first { margin: 0 18px 0 34px; }
.row1 .radio { font-size: 12px; }
.radio input { appearance: none; width: 12px; height: 12px; margin: 0; border-radius: 50%; background: #fff; border: 2px solid; border-color: #8a8a8a #f4f4f4 #f4f4f4 #8a8a8a; }
.radio input:checked { background: radial-gradient(circle, #000 2px, #fff 3px); }
.radio.off { color: #a0a0a0; text-shadow: 1px 1px #fff; }
.radio.off input { background: var(--face); }
.radio.off input:checked { background: radial-gradient(circle, #999 2px, var(--face) 3px); }
.row1 .w-tpl { margin-left: 8px; }
.row2 { height: 33px; margin: 0 5px 0 28px; border-bottom: 1px solid #fff; display: flex; align-items: center; padding: 0 0 7px 1px; flex: none; }
.row2 .combo { margin-right: 12px; font-size: 12px; }
.row2 .w-size, .row2 .w-zoom { margin-right: 5px; }
.vsep { width: 2px; height: 20px; margin: 0 4px 0 0; border-left: 1px solid #999; border-right: 1px solid #fff; flex: none; }
.fmt { width: 24px; height: 22px; font-size: 14px; }
.fmt + .vsep { margin-left: 4px; }
.fmt.on { background: #abd5f5; border: 1px solid #1a78c8; }

/* document workspace */
.work { flex: 1; min-height: 0; display: grid; grid-template: 23px minmax(0, 1fr) / 28px minmax(0, 1fr); padding-right: 5px; }
.ruler-top { grid-column: 2; display: flex; align-items: flex-start; padding: 3px 0 0 3px; overflow: hidden; }
.tabkind { width: 15px; height: 15px; background: #f5f5f5; border: 1px solid #888; margin-right: 29px; }
.hruler { width: 796px; height: 20px; }
.vruler { width: 20px; height: 712px; margin-left: 8px; }
.nums { font-size: 10px; }
.canvas { border: 1px solid #000; background: #c8d3e7; overflow: hidden; display: flex; justify-content: space-between; }
.sheet { width: 796px; height: 711px; margin-left: 46px; border: solid #000; border-width: 0 1px 1px; background: #fff; box-shadow: 6px 6px 3px -1px #444; padding-left: 76px; flex: none; }
.doc { border-collapse: collapse; table-layout: fixed; width: 675px; }
.doc .d1 { width: 50px; } .doc .d2 { width: 59px; } .doc .d3 { width: 43px; } .doc .d4 { width: 314px; } .doc .d5 { width: 107px; } .doc .d6 { width: 101px; }
.doc td { border: solid #c0c0c0; border-width: 0 1px; padding: 0 3px 0 2px; vertical-align: top; white-space: nowrap; overflow: hidden; line-height: 14px; }
.doc .txt { padding-left: 1px; line-height: 18px; }
.doc .r1 { height: 202px; } .doc .r2 { height: 208px; } .doc .r3 { height: 204px; }
.doc .r1 .txt { padding-top: 3px; }
.doc .r2 td, .doc .r3 td { border-top-width: 1px; }
.doc .num { text-align: right; }
.tight { line-height: 17px; }
.dash { height: 14px; width: 254px; margin-bottom: 5px; border-bottom: 1px dashed #888; }
.vscroll { width: 17px; background: #f0f0f0; color: #555; padding: 6px 0 0 3px; }
.vscroll svg { width: 10px; height: 6px; }

/* status bar */
.status { height: 42px; padding: 2px 8px 0 8px; display: flex; align-items: center; gap: 8px; white-space: nowrap; flex: none; }
.well { height: 20px; border: 1px solid; border-color: #a0a0a0 #fff #fff #a0a0a0; padding: 0 2px; line-height: 18px; text-align: center; flex: none; }
.w1 { width: 55px; } .w2 { width: 35px; } .w3 { width: 103px; }
.well.w3 { text-align: right; padding-right: 1px; }
.well.fill { flex: 1; text-align: left; margin-left: -2px; }
.round { width: 16px; height: 16px; border: 1px solid #777; border-radius: 50%; background: #f2f2f2; margin: 0 -3px; }
.round svg { width: 14px; height: 14px; }
.slider { appearance: none; width: 81px; height: 20px; margin: 0 2px; background: linear-gradient(#999, #999) 0 8px / 100% 1px no-repeat, linear-gradient(#fff, #fff) 0 9px / 100% 4px no-repeat; }
.slider::-webkit-slider-thumb { appearance: none; width: 6px; height: 20px; background: #f0f0f0; border: solid; border-width: 1px; border-color: #fff #888 #888 #fff; }

/* right pane */
.corner { justify-self: end; margin: 0 2px 3px 0; }
.page.p1 { padding: 4px 4px 4px 5px; margin-bottom: 6px; }
.page.p2 { padding: 6px 4px 4px 5px; }
.page.p3 { padding: 0 4px 0 6px; }
.posrow { display: flex; height: 60px; flex: none; }
.posbox { flex: 1; height: 50px; border: 1px solid #000080; display: flex; padding-right: 1px; }
.posno { width: 65px; border-right: 1px solid #000080; padding: 1px 2px; }
.postext { flex: 1; padding: 1px; }
.sb { width: 16px; display: flex; flex-direction: column; justify-content: space-between; background: repeating-linear-gradient(45deg, #fff 0 1px, #d0d0d0 1px 2px); }
.sb i { height: 16px; }
.sb s { height: 6px; margin-bottom: 7px; background: #eee; border-bottom: 1px solid #777; }
.sb i, .gs { display: flex; align-items: center; justify-content: center; background: #f0f0f0; border: solid; border-width: 1px 2px 2px 1px; border-color: #fff #888 #888 #fff; }
.up::after, .down::after { content: ""; border: 4px solid transparent; }
.up::after { border-bottom-color: currentColor; border-top: 0; }
.down::after { border-top-color: currentColor; border-bottom: 0; }
.updown { width: 34px; display: flex; flex-direction: column; gap: 17px; padding: 6px 8px 0 10px; }
.updown svg { width: 16px; height: 9px; }
.bigbar { height: 50px; display: flex; align-items: center; gap: 18px; padding: 0 0 0 5px; flex: none; }
.formel { gap: 1px; margin-left: -3px; color: #a0a0a0; text-shadow: 1px 1px #fff; }
.formel svg { opacity: .85; }
.bigsep { width: 2px; height: 36px; border-left: 1px solid #999; border-right: 1px solid #fff; margin: 0 -6px 0 3px; }
.binbtn { margin: 0 -2px 0 7px; }
.bigbar .combo { margin-left: -14px; }
.gridframe { flex: 1; min-height: 0; display: flex; border: solid; border-width: 2px 1px 1px 2px; border-color: #7c7c7c #fff #fff #7c7c7c; background: #fff; }
.gridclip { flex: 1; min-width: 0; overflow: hidden; }
.calc { width: 100%; table-layout: fixed; border-collapse: separate; border-spacing: 0; }
.calc .c1 { width: 34px; } .calc .c2 { width: 100px; } .calc .c3 { width: 86px; } .calc .c4 { width: 79px; } .calc .c5 { width: 107px; }
.calc th { height: 17px; padding: 0; font-weight: normal; line-height: 17px; background: linear-gradient(#fff, #c9d5e8); }
.calc td { height: 20px; padding: 0 2px 0 1px; line-height: 16px; vertical-align: top; border: solid #c5d2e4; border-width: 0 1px 1px 0; white-space: nowrap; }
.calc td:last-child { text-align: right; padding-right: 4px; }
.calc tbody tr:nth-child(even) { background: #f2f7ff; }
.calc tbody tr.sub { background: #99ffff; }
.calc tbody tr.tot { background: #ffff99; }
.calc tbody tr.sel { background: #0078d7; }
.gridscroll { width: 20px; padding-left: 3px; display: flex; flex-direction: column; background: linear-gradient(90deg, #fff 3px, var(--face) 3px); color: #999; }
.colpick { height: 17px; margin-left: -3px; background: linear-gradient(#fff, #c9d5e8); }
.gs { height: 17px; background: var(--face); }
.gs.down { margin-top: auto; }
.modes { height: 52px; display: flex; justify-content: flex-end; gap: 34px; padding: 7px 29px 0 0; flex: none; }
.modes .radio { height: 20px; gap: 8px; }
.hbar { height: 5px; margin-right: 1px; border: solid; border-width: 2px 0 1px; border-color: #fff #777 #777; background: #444; flex: none; }
.dock { height: 34px; display: flex; justify-content: flex-end; align-items: center; padding-right: 3px; flex: none; }

/* print preview window */
.dialog { position: absolute; left: 418px; right: 501px; top: 367px; bottom: 42px; border: 1px solid #a0a0a0; background: #fff; box-shadow: 0 2px 14px rgba(0, 0, 0, .35); display: flex; flex-direction: column; font: 11px/15px var(--seg); }
.dtitle { height: 30px; display: flex; align-items: center; gap: 5px; padding-left: 9px; color: #8c8c8c; flex: none; }
.bands { height: 94px; padding: 1px 0 0 1px; border-bottom: 2px solid #6f6f6f; background: linear-gradient(#c8c5bb 20px, #fff 75px); display: flex; flex-direction: column; gap: 2px; flex: none; }
.bandrow { display: flex; gap: 2px; height: 28px; }
.bandrow:last-child { height: 30px; }
.band { background: #f0f0f0; border: solid; border-width: 0 1px 1px 0; border-color: #999; display: flex; align-items: center; white-space: nowrap; }
.band::before { content: ""; width: 4px; height: 24px; margin: 0 0 0 2px; border: solid #aaa; border-width: 0 1px; flex: none; }
.band button { width: 32px; height: 28px; }
.band .dsep { width: 2px; height: 24px; margin: 0 7px; border-left: 1px solid #999; border-right: 1px solid #fff; flex: none; }
.b1 { width: 450px; }
.b2 { width: 196px; }
.b2 button { width: 29px; }
.pageno { width: 33px; height: 18px; border: 1px solid #999; background: #fff; text-align: right; padding: 0 4px; margin: 0 6px 0 1px; }
.b2 .nextbtn { margin-left: 18px; }
.b3 { width: 228px; }
.b3 button { width: 30px; }
.b4 { width: 325px; }
.b5 { width: 636px; }
.zoombox { width: 67px; height: 20px; border: 1px solid #999; background: #fff; display: flex; margin: 0 4px 0 6px; flex: none; }
.zoombox select { appearance: none; border: 0; background: none; flex: 1; min-width: 0; padding: 0 6px; }
.zoombox i { width: 18px; border: 1px solid #999; background: #eee; display: grid; place-items: center; color: #555; }
.zoombox svg { width: 10px; height: 6px; }
.find { width: 214px; height: 20px; border: 1px solid #999; background: #fff; margin: 0 4px 0 10px; padding: 0 3px; }
.b5 > label:first-of-type { margin-left: 4px; width: 32px; }
.chk { display: flex; align-items: center; gap: 4px; margin: 0 5px 0 7px; }
.chk input { appearance: none; width: 13px; height: 13px; margin: 0; border: 1px solid #333; background: #fff; }
.view { flex: 1; min-height: 0; display: flex; overflow: hidden; background: #ababab; }
.thumbpane { width: 120px; position: relative; padding: 10px 0 0 19px; }
.thumb { width: 65px; height: 93px; }
.badge { position: absolute; left: 19px; top: 10px; width: 12px; height: 20px; border: 1px solid #000; background: #ffffd8; text-align: center; line-height: 18px; }
.vsplit { width: 8px; background: #fff; border: solid #777; border-width: 0 2px 1px 0; margin-bottom: 3px; }
.pagearea { flex: 1; min-width: 0; padding: 0 26px; }
.report { height: 100%; overflow: hidden; background: #fff; padding: 0 38px; font: 12px/15px var(--rep); }
.rbar { height: 27px; border: 1px solid #000; background: #dcdcdc; padding: 0 3px; font-size: 13px; font-weight: bold; line-height: 24px; }
.rhead { height: 169px; border: solid #000; border-width: 0 1px; padding: 0 3px 0 12px; }
.rline { height: 34px; display: flex; align-items: baseline; padding: 3px 70px 0 1px; }
.rline h2 { font-size: 22px; line-height: 26px; font-weight: normal; font-variant-ligatures: none; width: 136px; }
.rline b { font-size: 13px; }
.rline span { margin-left: auto; font-size: 11px; }
.rgrid { display: grid; grid-template-columns: 106px 233px 105px 1fr; line-height: 23px; }
.rgrid .two { grid-column: span 2; }
.rgrid address { font-style: normal; line-height: 15px; padding-top: 1px; }
.rgrid .lh { line-height: 15px; padding-top: 1px; }
.seite { text-align: right; padding-top: 7px; font-size: 11px; }
.report h3 { height: 28px; border: solid #000; border-width: 1px 1px 0; background: #e5e5e5; padding-left: 4px; font-size: 17px; line-height: 22px; display: flex; }
.report .s2 { height: 29px; border-bottom-width: 1px; }
.s1 span { width: 32px; }
.s2 span { width: 48px; }
.loc { padding-left: 26px; font-weight: bold; line-height: 17px; height: 20px; }
.loc.big { height: 21px; }
.report h4 { height: 23px; border: solid #000; border-width: 1px 1px 0; background: #bfbfbf; padding-left: 3px; font-size: 13px; font-weight: normal; line-height: 19px; display: flex; }
.report h4 span:nth-child(1) { width: 65px; }
.report h4 span:nth-child(2) { width: 19px; }
.item { display: grid; grid-template-columns: 182px 1fr 18px 89px; padding: 0 3px 0 42px; line-height: 19px; height: 20px; }
.item span:last-child { text-align: right; }
.dscroll { width: 17px; background: #f0f0f0; display: flex; flex-direction: column; align-items: center; padding: 6px 0; color: #555; }
.dscroll svg { width: 10px; height: 6px; }
.dscroll i { width: 15px; height: 153px; background: #cdcdcd; margin: 25px 0 auto; }
.hint { height: 59px; border-top: 1px solid #e8f5c8; background: #d7ff8b; display: flex; align-items: center; gap: 13px; padding: 0 0 2px 11px; flex: none; }
```
